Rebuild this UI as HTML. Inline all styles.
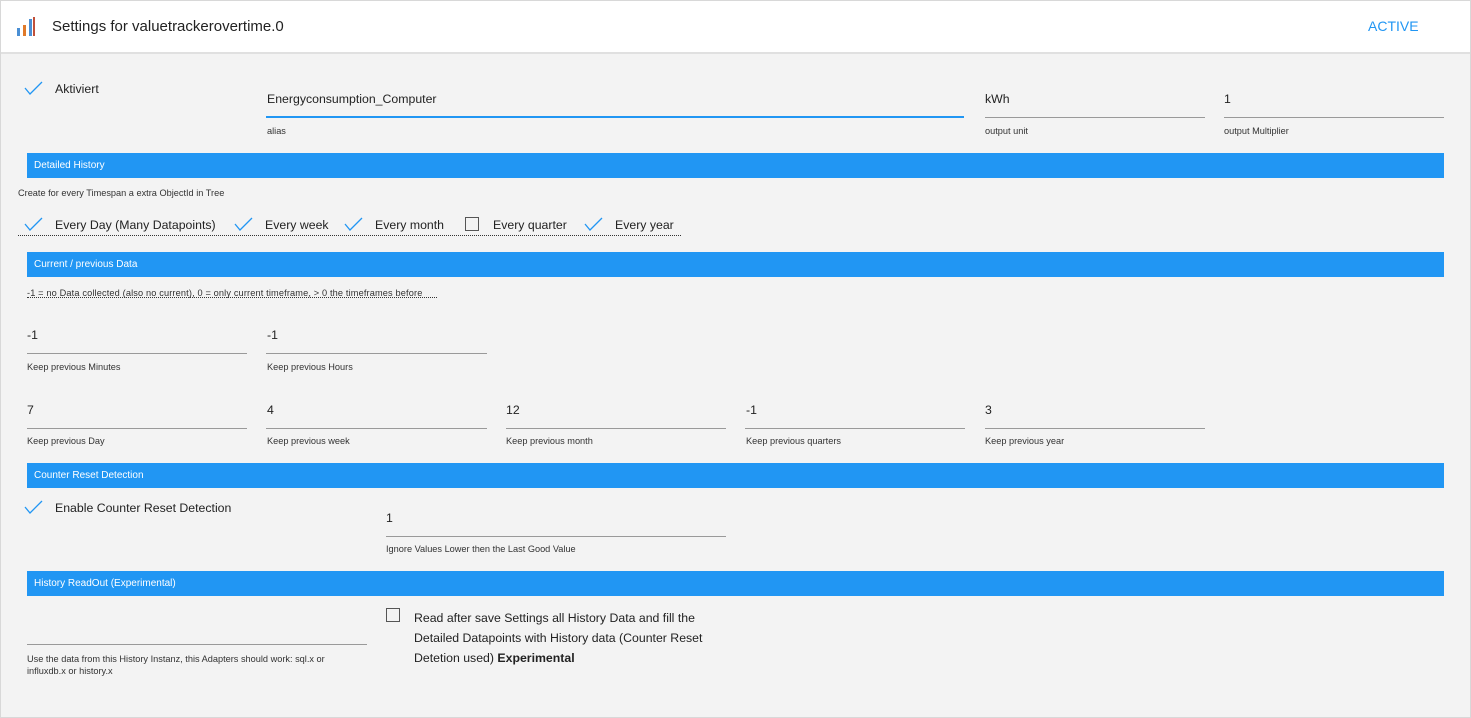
<!DOCTYPE html>
<html><head><meta charset="utf-8"><style>
*{box-sizing:border-box;margin:0;padding:0}
body{width:1471px;height:718px;background:#f3f3f3;font-family:"Liberation Sans",sans-serif;color:#222;position:relative;overflow:hidden}
.frame{position:absolute;left:0;top:0;width:1471px;height:718px;border:1px solid #d8d8d8;pointer-events:none}
.a{position:absolute;white-space:nowrap}
.hdr{position:absolute;left:0;top:0;width:1471px;height:54px;background:#fff;border-bottom:2px solid #e0e0e0}
.bar{position:absolute;left:27px;width:1417px;height:25px;background:#2196f3;color:#fff;font-size:10px;padding:7px 0 0 7px}
.t{font-size:12.3px;color:#222}
.l{font-size:9.2px;color:#333}
.ln{position:absolute;height:1px;background:#999}
.ck{position:absolute;width:20px;height:16px}
.bx{position:absolute;width:14px;height:14px;border:1.3px solid #555}
</style></head><body>
<div class="hdr">
<svg class="a" style="left:16px;top:16px" width="22" height="22"><rect x="1" y="12" width="3" height="8" fill="#4a8fd4"/><rect x="7" y="9" width="3" height="11" fill="#e07a2a"/><rect x="13" y="3" width="3" height="17" fill="#4a8fd4"/><rect x="17" y="1" width="2" height="19" fill="#c0503a"/></svg>
<div class="a" style="left:52px;top:18px;font-size:15px;color:#222">Settings for valuetrackerovertime.0</div>
<div class="a" style="left:1368px;top:18px;font-size:14px;color:#2196f3">ACTIVE</div>
</div>

<svg class="ck" style="left:24px;top:80px"><polyline points="1,8 6,14 18,2" fill="none" stroke="#2196f3" stroke-width="1.3"/></svg>
<div class="a t" style="left:55px;top:82px">Aktiviert</div>

<div class="a t" style="left:267px;top:92px">Energyconsumption_Computer</div>
<div class="ln" style="left:266px;top:116px;width:698px;height:2px;background:#2196f3"></div>
<div class="a l" style="left:267px;top:126px">alias</div>
<div class="a t" style="left:985px;top:92px">kWh</div>
<div class="ln" style="left:985px;top:117px;width:220px"></div>
<div class="a l" style="left:985px;top:126px">output unit</div>
<div class="a t" style="left:1224px;top:92px">1</div>
<div class="ln" style="left:1224px;top:117px;width:220px"></div>
<div class="a l" style="left:1224px;top:126px">output Multiplier</div>

<div class="bar" style="top:153px">Detailed History</div>
<div class="a l" style="left:18px;top:188px">Create for every Timespan a extra ObjectId in Tree</div>
<svg class="ck" style="left:24px;top:216px"><polyline points="1,8 6,14 18,2" fill="none" stroke="#2196f3" stroke-width="1.3"/></svg>
<div class="a t" style="left:55px;top:218px">Every Day (Many Datapoints)</div>
<svg class="ck" style="left:234px;top:216px"><polyline points="1,8 6,14 18,2" fill="none" stroke="#2196f3" stroke-width="1.3"/></svg>
<div class="a t" style="left:265px;top:218px">Every week</div>
<svg class="ck" style="left:344px;top:216px"><polyline points="1,8 6,14 18,2" fill="none" stroke="#2196f3" stroke-width="1.3"/></svg>
<div class="a t" style="left:375px;top:218px">Every month</div>
<div class="bx" style="left:465px;top:217px"></div>
<div class="a t" style="left:493px;top:218px">Every quarter</div>
<svg class="ck" style="left:584px;top:216px"><polyline points="1,8 6,14 18,2" fill="none" stroke="#2196f3" stroke-width="1.3"/></svg>
<div class="a t" style="left:615px;top:218px">Every year</div>
<div class="a" style="left:18px;top:235px;width:663px;border-top:1px dotted #333"></div>

<div class="bar" style="top:252px">Current / previous Data</div>
<div class="a l" style="left:27px;top:288px;letter-spacing:0.15px">-1 = no Data collected (also no current), 0 = only current timeframe, &gt; 0 the timeframes before</div>
<div class="a" style="left:27px;top:297px;width:410px;border-top:1px dotted #333"></div>

<div class="a t" style="left:27px;top:328px">-1</div><div class="ln" style="left:27px;top:353px;width:220px"></div><div class="a l" style="left:27px;top:362px">Keep previous Minutes</div>
<div class="a t" style="left:267px;top:328px">-1</div><div class="ln" style="left:266px;top:353px;width:221px"></div><div class="a l" style="left:267px;top:362px">Keep previous Hours</div>

<div class="a t" style="left:27px;top:403px">7</div><div class="ln" style="left:27px;top:428px;width:220px"></div><div class="a l" style="left:27px;top:436px">Keep previous Day</div>
<div class="a t" style="left:267px;top:403px">4</div><div class="ln" style="left:266px;top:428px;width:221px"></div><div class="a l" style="left:267px;top:436px">Keep previous week</div>
<div class="a t" style="left:506px;top:403px">12</div><div class="ln" style="left:506px;top:428px;width:220px"></div><div class="a l" style="left:506px;top:436px">Keep previous month</div>
<div class="a t" style="left:746px;top:403px">-1</div><div class="ln" style="left:745px;top:428px;width:220px"></div><div class="a l" style="left:746px;top:436px">Keep previous quarters</div>
<div class="a t" style="left:985px;top:403px">3</div><div class="ln" style="left:985px;top:428px;width:220px"></div><div class="a l" style="left:985px;top:436px">Keep previous year</div>

<div class="bar" style="top:463px">Counter Reset Detection</div>
<svg class="ck" style="left:24px;top:499px"><polyline points="1,8 6,14 18,2" fill="none" stroke="#2196f3" stroke-width="1.3"/></svg>
<div class="a t" style="left:55px;top:501px">Enable Counter Reset Detection</div>
<div class="a t" style="left:386px;top:511px">1</div><div class="ln" style="left:386px;top:536px;width:340px"></div><div class="a l" style="left:386px;top:544px">Ignore Values Lower then the Last Good Value</div>

<div class="bar" style="top:571px">History ReadOut (Experimental)</div>
<div class="ln" style="left:27px;top:644px;width:340px"></div>
<div class="a l" style="left:27px;top:653px;line-height:12px">Use the data from this History Instanz, this Adapters should work: sql.x or<br>influxdb.x or history.x</div>
<div class="bx" style="left:386px;top:608px"></div>
<div class="a t" style="left:414px;top:608px;line-height:20px">Read after save Settings all History Data and fill the<br>Detailed Datapoints with History data (Counter Reset<br>Detetion used) <b>Experimental</b></div>
<div class="frame"></div>
</body></html>
